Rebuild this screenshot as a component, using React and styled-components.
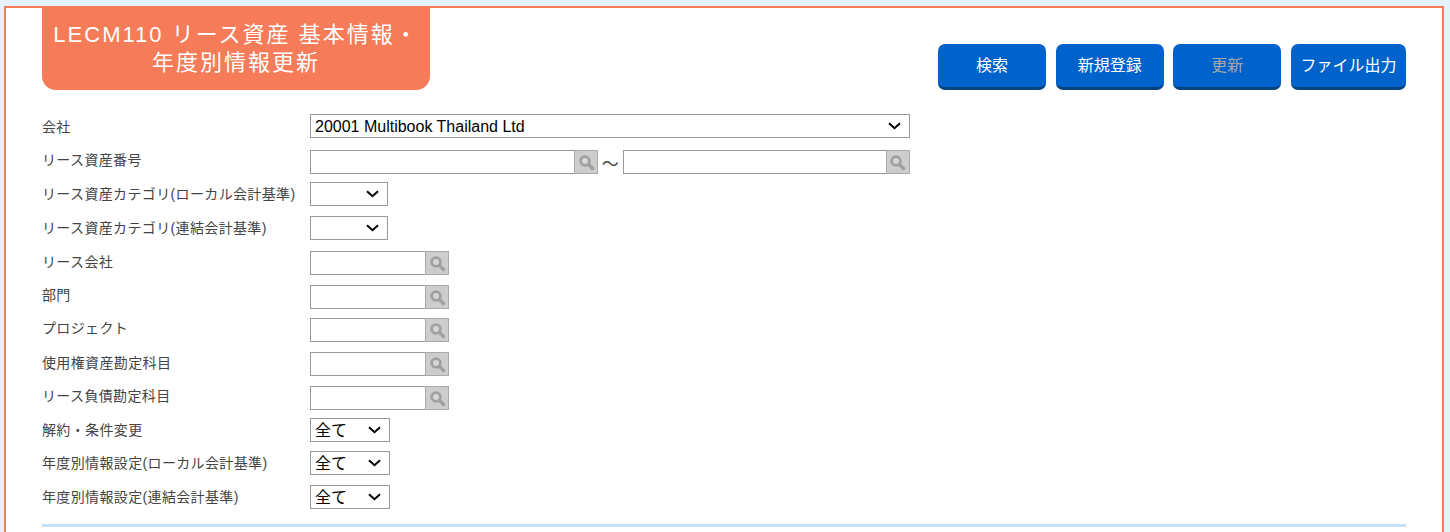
import React from "react"
import styled, { createGlobalStyle } from "styled-components"

const fontStack = `"Liberation Sans", "Noto Sans CJK JP", sans-serif`

const chevron = `url("data:image/svg+xml,%3Csvg xmlns='http://www.w3.org/2000/svg' width='13' height='8' viewBox='0 0 13 8'%3E%3Cpath d='M1 1.2 L6.5 6.2 L12 1.2' fill='none' stroke='%23000' stroke-width='2'/%3E%3C/svg%3E")`

const GlobalStyle = createGlobalStyle`
html, body {
    margin: 0;
    padding: 0;
    height: 100%;
    overflow: hidden;
    background: #e3f2fd;
}
body {
    font-family: ${fontStack};
}
`

const Panel = styled.main`
box-sizing: border-box;
height: calc(100vh - 6px);
margin: 6px 6px 0 4px;
padding: 0 36px;
background: #fff;
border: 2px solid #f67b58;
border-bottom: none;
`

const Header = styled.header`
display: flex;
justify-content: space-between;
align-items: flex-end;
height: 82px;
`

const Title = styled.h1`
box-sizing: border-box;
width: 388px;
height: 82px;
margin: 0;
padding: 13px 10px 0;
background: #f67b58;
border-radius: 0 0 14px 14px;
color: #fff;
font-size: 22px;
font-weight: normal;
line-height: 28px;
letter-spacing: 2px;
text-align: center;
`

const Buttons = styled.div`
display: flex;
gap: 9.67px;
`

const ActionButton = styled.button`
box-sizing: border-box;
width: ${p => p.$width || 108}px;
height: 46px;
padding: 0 0 3px;
border: none;
border-bottom: 3px solid #01427f;
border-radius: 7px;
background: #0063cc;
color: ${p => (p.disabled ? "#a8a8a8" : "#fff")};
font-family: ${fontStack};
font-size: 16px;
`

const Form = styled.form`
margin-top: 24px;
`

const Row = styled.div`
display: flex;
align-items: center;
height: 24px;
margin-top: ${p => p.$gap || 0}px;
`

const Label = styled.label`
flex: 0 0 268px;
margin-top: ${p => p.$lift ?? -3}px;
color: #444;
font-size: 14px;
letter-spacing: 0.36px;
`

const Select = styled.select`
box-sizing: border-box;
appearance: none;
width: ${p => p.$width}px;
height: 24px;
padding: 0 0 0 4px;
border: 1px solid #999;
border-radius: 0;
background: #fff ${chevron} no-repeat right 8px center;
color: #000;
font-family: ${fontStack};
font-size: 16px;
`

const LookupBox = styled.div`
display: flex;
`

const Input = styled.input`
box-sizing: border-box;
width: ${p => p.$width}px;
height: 24px;
padding: 0 4px;
border: 1px solid #999;
border-right: none;
border-radius: 0;
background: #fff;
`

const LookupButton = styled.button`
box-sizing: border-box;
display: flex;
align-items: center;
justify-content: center;
width: 24px;
height: 24px;
padding: 0;
border: 1px solid #aaa;
background: #cdcdcd;
`

const Tilde = styled.span`
width: 24.6px;
color: #444;
font-size: 17px;
text-align: center;
`

const Divider = styled.hr`
height: 3px;
margin: 15px 0 0;
border: none;
background: #c8e0f6;
`

const MagnifierIcon = () => (
    <svg width="17" height="17" viewBox="0 0 17 17" aria-hidden="true">
        <circle cx="7" cy="7" r="4.4" fill="#d6d6d6" stroke="#a0a0a0" strokeWidth="2.8" />
        <path d="M10.5 10.5 L14.5 14.5" stroke="#a0a0a0" strokeWidth="3.4" strokeLinecap="round" />
    </svg>
)

const Lookup = ({ width }) => (
    <LookupBox>
        <Input type="text" $width={width} />
        <LookupButton type="button"><MagnifierIcon /></LookupButton>
    </LookupBox>
)

const ChoiceSelect = ({ width = 80, value }) => (
    <Select $width={width} defaultValue={value}>
        <option value={value}>{value}</option>
    </Select>
)

export default function App() {
    return (
        <>
            <GlobalStyle />
            <Panel>
                <Header>
                    <Title>LECM110 リース資産 基本情報・年度別情報更新</Title>
                    <Buttons>
                        <ActionButton type="button">検索</ActionButton>
                        <ActionButton type="button">新規登録</ActionButton>
                        <ActionButton type="button" disabled>更新</ActionButton>
                        <ActionButton type="button" $width={115}>ファイル出力</ActionButton>
                    </Buttons>
                </Header>
                <Form>
                    <Row>
                        <Label $lift={-1}>会社</Label>
                        <ChoiceSelect width={600} value="20001 Multibook Thailand Ltd" />
                    </Row>
                    <Row $gap={12}>
                        <Label $lift={-6}>リース資産番号</Label>
                        <Lookup width={264} />
                        <Tilde>〜</Tilde>
                        <Lookup width={263.4} />
                    </Row>
                    <Row $gap={8}>
                        <Label>リース資産カテゴリ(ローカル会計基準)</Label>
                        <ChoiceSelect width={78} value="" />
                    </Row>
                    <Row $gap={10}>
                        <Label>リース資産カテゴリ(連結会計基準)</Label>
                        <ChoiceSelect width={78} value="" />
                    </Row>
                    <Row $gap={11}>
                        <Label $lift={-5}>リース会社</Label>
                        <Lookup width={115} />
                    </Row>
                    <Row $gap={10}>
                        <Label $lift={-6}>部門</Label>
                        <Lookup width={115} />
                    </Row>
                    <Row $gap={9}>
                        <Label $lift={-6}>プロジェクト</Label>
                        <Lookup width={115} />
                    </Row>
                    <Row $gap={10}>
                        <Label $lift={-5}>使用権資産勘定科目</Label>
                        <Lookup width={115} />
                    </Row>
                    <Row $gap={10}>
                        <Label $lift={-6}>リース負債勘定科目</Label>
                        <Lookup width={115} />
                    </Row>
                    <Row $gap={8}>
                        <Label>解約・条件変更</Label>
                        <ChoiceSelect value="全て" />
                    </Row>
                    <Row $gap={9}>
                        <Label>年度別情報設定(ローカル会計基準)</Label>
                        <ChoiceSelect value="全て" />
                    </Row>
                    <Row $gap={10}>
                        <Label>年度別情報設定(連結会計基準)</Label>
                        <ChoiceSelect value="全て" />
                    </Row>
                    <Divider />
                </Form>
            </Panel>
        </>
    )
}
